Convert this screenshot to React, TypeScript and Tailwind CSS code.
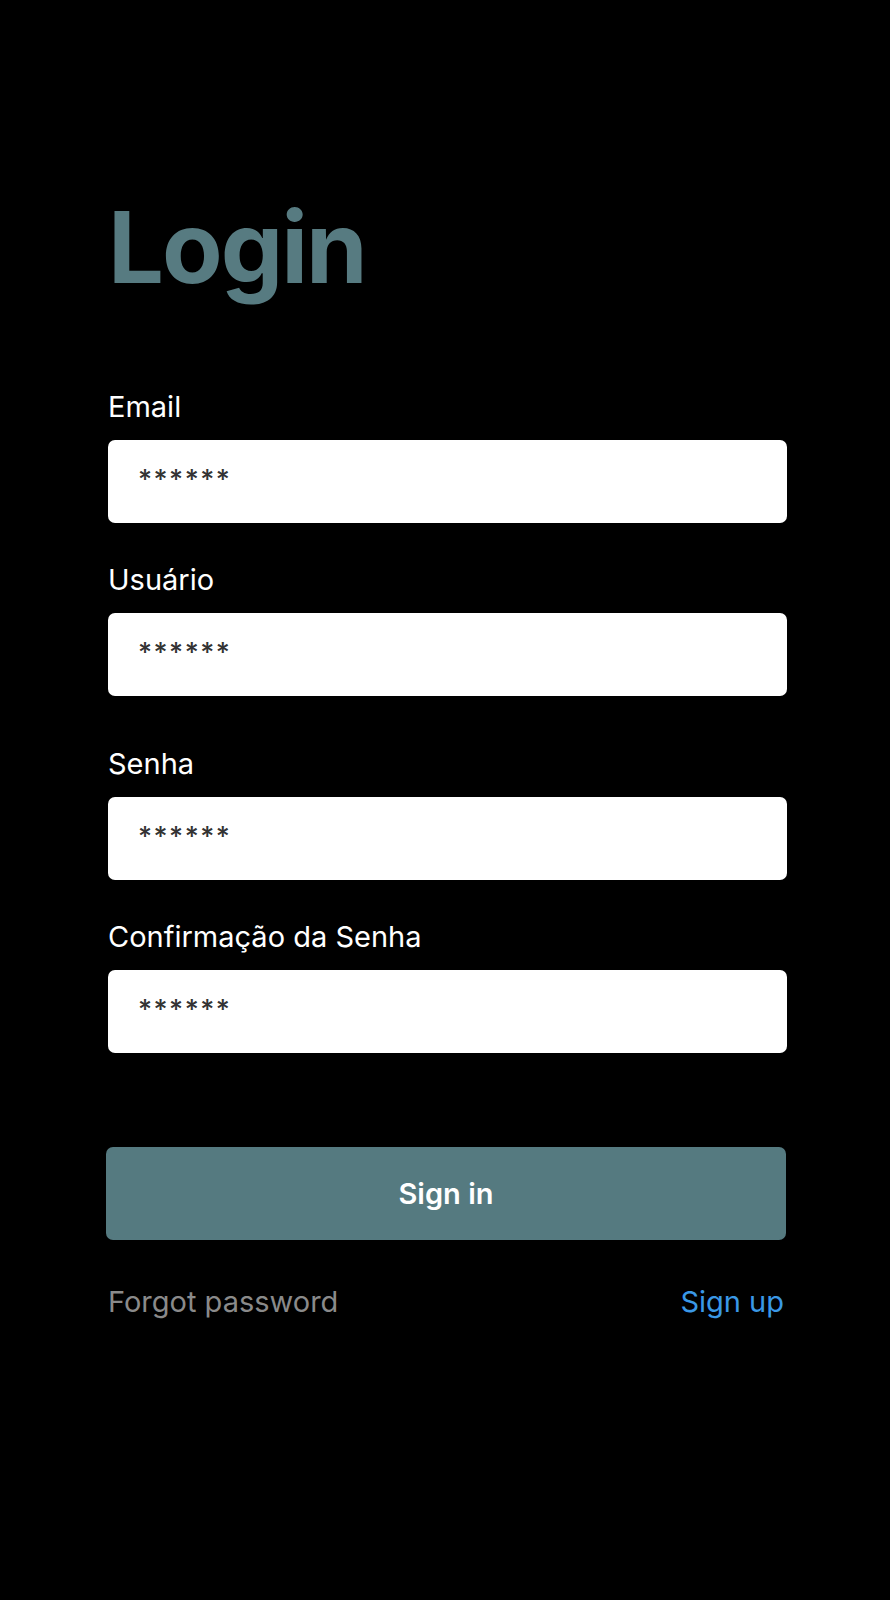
type FieldProps = {
  label: string;
  className: string;
};

const Field = ({ label, className }: FieldProps) => {
  return (
    <div className={`flex flex-col ${className}`}>
      <label className="text-[29px] leading-none text-white mb-[19px]">{label}</label>
      <div className="flex items-center h-[83px] bg-white rounded-[7px] pl-[30px] pb-[3px] text-[27px] font-medium text-[#333333] tracking-[1.5px]">
        ******
      </div>
    </div>
  );
};

const App = () => {
  return (
    <div className="min-h-[1600px] w-full bg-black font-['Inter',sans-serif]">
      <div className="flex flex-col ml-[108px] w-[679px] pt-[198px]">
        <h1 className="text-[99px] leading-none font-bold text-[#577b81] tracking-[-2px]">Login</h1>

        <Field label="Email" className="mt-[95px]" />
        <Field label="Usuário" className="mt-[42px]" />
        <Field label="Senha" className="mt-[53px]" />
        <Field label="Confirmação da Senha" className="mt-[42px]" />

        <button className="mt-[94px] -ml-[2px] w-[680px] h-[93px] rounded-[7px] bg-[#557a80] text-white text-[29px] font-semibold">
          Sign in
        </button>

        <div className="flex justify-between items-center mt-[47px] text-[29px] leading-none">
          <span className="text-[#8a8a8a]">Forgot password</span>
          <span className="text-[#3a98e6] mr-[3px]">Sign up</span>
        </div>
      </div>
    </div>
  );
};

export default App;
